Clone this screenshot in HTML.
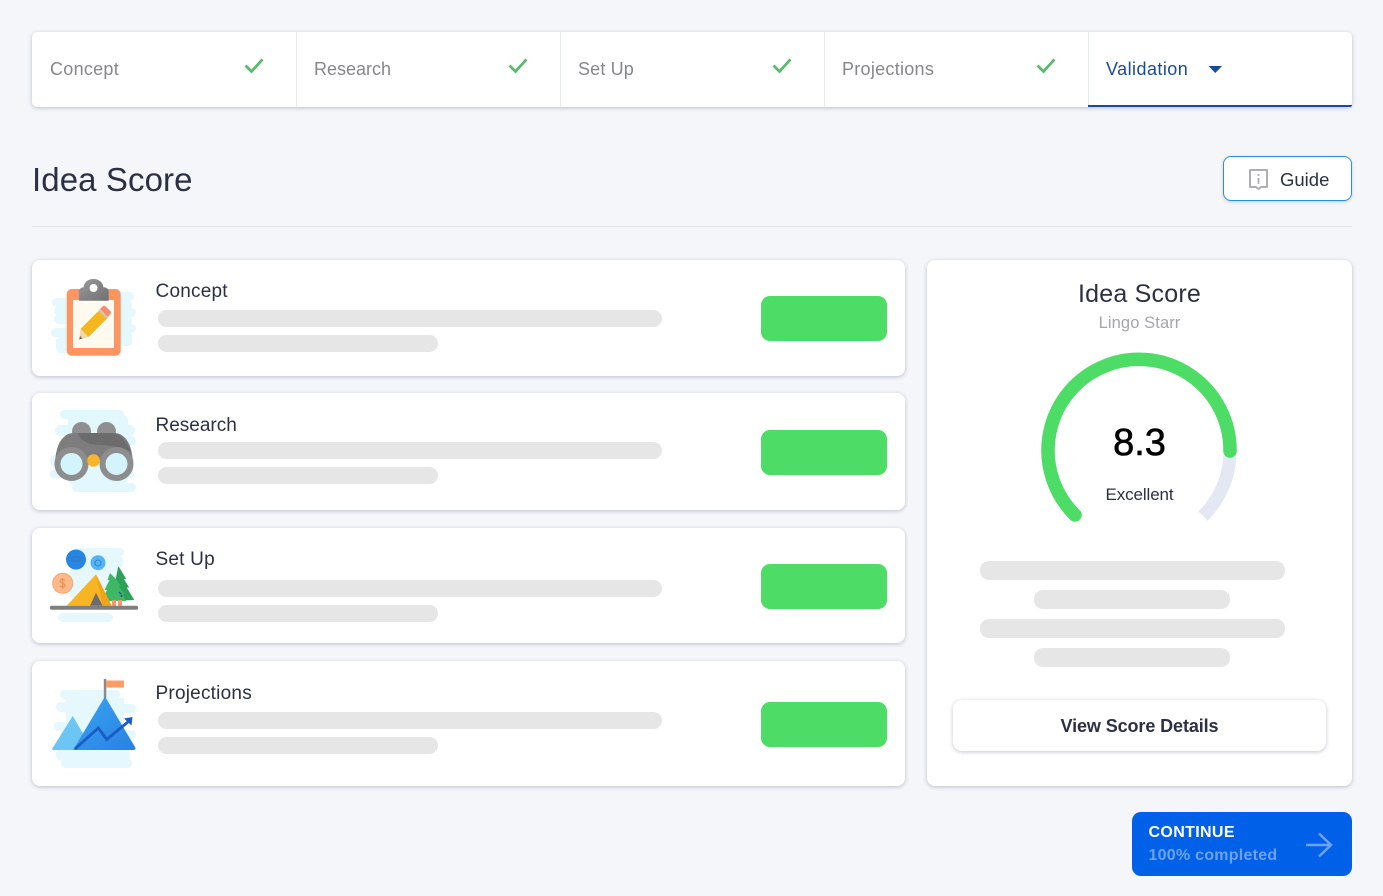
<!DOCTYPE html>
<html lang="en"><head><meta charset="utf-8"><title>Idea Score</title>
<style>
*{box-sizing:border-box}
html,body{margin:0;padding:0}
body{width:1383px;height:896px;background:#f4f6fa;position:relative;overflow:hidden;font-family:"Liberation Sans",sans-serif;color:#2c3045}
.a{position:absolute}
.card{position:absolute;background:#fff;border-radius:8px;box-shadow:0 1px 4px rgba(40,50,80,.28)}
.t{position:absolute;white-space:nowrap;line-height:24px}
.sk{position:absolute;background:#e6e6e6;border-radius:9px}
.gb{position:absolute;left:761px;width:126px;height:45px;background:#4ddc65;border-radius:9px}
.tab{position:absolute;top:57px;font-size:18px;letter-spacing:.28px;color:#85878b}
.ct{position:absolute;left:155.5px;font-size:19px;letter-spacing:.22px;color:#2c3045}
.sep{position:absolute;top:32px;width:1px;height:75px;background:#e8eaee}
svg{position:absolute;left:0;top:0}
</style></head><body>

<div class="card" style="left:32px;top:32px;width:1320px;height:75px;border-radius:5px"></div>
<div class="sep" style="left:296px"></div><div class="sep" style="left:560px"></div><div class="sep" style="left:824px"></div><div class="sep" style="left:1088px"></div>
<div class="a" style="left:1088px;top:105px;width:264px;height:2px;background:#1a4a9e;border-radius:0 0 4px 0"></div>
<div class="t tab" style="left:50px">Concept</div>
<div class="t tab" style="left:314px;letter-spacing:0">Research</div>
<div class="t tab" style="left:578px;letter-spacing:.15px">Set Up</div>
<div class="t tab" style="left:842px">Projections</div>
<div class="t tab" style="left:1106px;color:#1a4a9e;letter-spacing:.45px">Validation</div>

<div class="t" style="left:32px;top:160px;font-size:33px;line-height:40px;letter-spacing:.1px;color:#2c3045">Idea Score</div>
<div class="a" style="left:1223px;top:156px;width:129px;height:45px;background:#fff;border:1.5px solid #2b8fdc;border-radius:8px;box-shadow:0 1px 3px rgba(40,50,80,.2)"></div>
<div class="t" style="left:1280px;top:168px;font-size:18.5px;color:#2c3045">Guide</div>
<div class="a" style="left:32px;top:226px;width:1320px;height:1px;background:#dfe2e8"></div>

<div class="card" style="left:32px;top:260px;width:873px;height:116px"></div>
<div class="card" style="left:32px;top:393px;width:873px;height:117px"></div>
<div class="card" style="left:32px;top:528px;width:873px;height:115px"></div>
<div class="card" style="left:32px;top:661px;width:873px;height:125px"></div>
<div class="card" style="left:927px;top:260px;width:425px;height:526px"></div>

<div class="t ct" style="top:280px">Concept</div>
<div class="t ct" style="top:414px;letter-spacing:0">Research</div>
<div class="t ct" style="top:548px">Set Up</div>
<div class="t ct" style="top:682px">Projections</div>

<div class="sk" style="left:158px;top:310px;width:504px;height:17px"></div>
<div class="sk" style="left:158px;top:335px;width:280px;height:17px"></div>
<div class="sk" style="left:158px;top:442px;width:504px;height:17px"></div>
<div class="sk" style="left:158px;top:467px;width:280px;height:17px"></div>
<div class="sk" style="left:158px;top:580px;width:504px;height:17px"></div>
<div class="sk" style="left:158px;top:605px;width:280px;height:17px"></div>
<div class="sk" style="left:158px;top:712px;width:504px;height:17px"></div>
<div class="sk" style="left:158px;top:737px;width:280px;height:17px"></div>

<div class="gb" style="top:296px"></div>
<div class="gb" style="top:430px"></div>
<div class="gb" style="top:564px"></div>
<div class="gb" style="top:702px"></div>

<div class="t" style="left:927px;width:425px;text-align:center;top:279px;font-size:25px;line-height:30px;letter-spacing:.2px">Idea Score</div>
<div class="t" style="left:927px;width:425px;text-align:center;top:311px;font-size:16.5px;letter-spacing:.1px;color:#a3a5ab">Lingo Starr</div>
<div class="t" style="left:927px;width:425px;text-align:center;top:421px;font-size:38px;line-height:44px;color:#000;-webkit-text-stroke:.6px #000">8.3</div>
<div class="t" style="left:927px;width:425px;text-align:center;top:483px;font-size:17px;color:#2c3045;letter-spacing:-.1px">Excellent</div>

<div class="sk" style="left:980px;top:561px;width:305px;height:19px"></div>
<div class="sk" style="left:1034px;top:590px;width:196px;height:19px"></div>
<div class="sk" style="left:980px;top:619px;width:305px;height:19px"></div>
<div class="sk" style="left:1034px;top:648px;width:196px;height:19px"></div>

<div class="a" style="left:953px;top:700px;width:373px;height:51px;background:#fff;border-radius:9px;box-shadow:0 1px 4px rgba(40,50,80,.28)"></div>
<div class="t" style="left:953px;width:373px;text-align:center;top:714px;font-size:18px;font-weight:700;color:#2c3045;letter-spacing:-.1px">View Score Details</div>

<div class="a" style="left:1132px;top:812px;width:220px;height:64px;background:#0060e8;border-radius:9px"></div>
<div class="t" style="left:1148.5px;top:821px;font-size:16px;font-weight:700;color:#fff;letter-spacing:.35px">CONTINUE</div>
<div class="t" style="left:1148.5px;top:844px;font-size:16px;font-weight:700;color:#6ea2f1;letter-spacing:.25px">100% completed</div>

<svg width="1383" height="896" viewBox="0 0 1383 896" fill="none">
<defs>
<linearGradient id="mt" x1="0" y1="0" x2="1" y2="1"><stop offset="0" stop-color="#38a6f2"/><stop offset="1" stop-color="#2a80e2"/></linearGradient>
<linearGradient id="clip" x1="0" y1="0" x2="1" y2="1"><stop offset="0" stop-color="#9a9a9c"/><stop offset="1" stop-color="#707073"/></linearGradient>
</defs>
<!-- tab checks -->
<g stroke="#5abb6e" stroke-width="2.800" stroke-linecap="square">
<path d="M246.500 66.500l5 5 10-11"/><path d="M510.500 66.500l5 5 10-11"/><path d="M774.500 66.500l5 5 10-11"/><path d="M1038.500 66.500l5 5 10-11"/>
</g>
<path d="M1208.500 66h13.500l-6.700 7z" fill="#1a4a9e"/>
<!-- guide icon -->
<path d="M1250 170h17v17h-6l-2.500 2-2.500-2h-6z" stroke="#adafb4" stroke-width="2" stroke-linejoin="round"/>
<path d="M1258.500 174v2M1258.500 178v6" stroke="#adafb4" stroke-width="1.800"/>
<!-- continue arrow -->
<path d="M1306 845h24M1319 833.500l12 11.500-12 11.500" stroke="#6ea2f1" stroke-width="2.500"/>
<!-- gauge -->
<path d="M1230 451A91 91 0 0 1 1203 516" stroke="#e3e8f2" stroke-width="13"/>
<path d="M1075 515A91 91 0 1 1 1230 451" stroke="#4ddc65" stroke-width="13.500" stroke-linecap="round"/>

<!-- clipboard -->
<g fill="#e4f8fe">
<rect x="52" y="298" width="30" height="9" rx="4.500"/><rect x="54" y="306" width="28" height="10" rx="5"/><rect x="54" y="315" width="28" height="9" rx="4.500"/><rect x="51" y="328" width="30" height="9" rx="4.500"/><rect x="56" y="337" width="24" height="16" rx="4"/>
<rect x="108" y="292" width="26" height="9" rx="4.500"/><rect x="108" y="300" width="24" height="10" rx="5"/><rect x="108" y="308" width="28" height="9" rx="4.500"/><rect x="108" y="316" width="24" height="10" rx="5"/><rect x="108" y="324" width="28" height="9" rx="4.500"/><rect x="108" y="332" width="24" height="14" rx="4"/>
</g>
<rect x="66.700" y="289" width="54" height="66.700" rx="5" fill="#fd9560"/>
<rect x="73" y="300" width="41" height="48" fill="#fffaf0"/>
<path d="M79 300.700v-8.500c0-3.200 2-5 5-5h-.4c.4-4.800 4.300-8.200 9.900-8.200s9.500 3.400 9.900 8.200h.3c3 0 5 1.800 5 5v8.500z" fill="url(#clip)"/>
<circle cx="93.500" cy="288" r="4" fill="#fff"/>
<path d="M80.500 329l20-20 8 8-20 20z" fill="#f5b61e"/>
<path d="M100 309l2.500-2.500c1-1 2.300-1 3.200 0l4.500 4.500c1 1 1 2.200 0 3.200l-2.200 2.800z" fill="#fb8a6a"/>
<path d="M98.500 310.500l1.500-1.500 8 8-1.500 1.500z" fill="#c9c9c9"/>
<path d="M80.500 329l8 8-9.300 2.500z" fill="#f0d6a8"/><path d="M80 336l2.500 2.500-3.300 1z" fill="#666"/>

<!-- binoculars -->
<g fill="#e2f7fe">
<rect x="60" y="410" width="64" height="9" rx="4.500"/><rect x="68" y="415" width="60" height="70" rx="6"/><rect x="55" y="425" width="80" height="11" rx="5.500"/><rect x="70" y="436" width="66" height="10" rx="5"/><rect x="50" y="455" width="84" height="12" rx="6"/><rect x="50" y="470" width="84" height="8" rx="4"/><rect x="72" y="483" width="64" height="9" rx="4.500"/>
</g>
<circle cx="81.500" cy="431.500" r="9.500" fill="#8f8f8f"/><circle cx="106.500" cy="431.500" r="9.500" fill="#8f8f8f"/>
<path d="M55 464c.5-12 3-22 9-27 3-3 6-4 11-4h38c5 0 8 1 11 4 6 5 8.500 15 9 27h-28l-4-4H85l-4 4z" fill="#7d7d7d"/>
<path d="M78 433h35c8 1 14 9 18 19-9-5-19-6-30-7-11 0-20-3-23-12z" fill="#6c6c6c"/>
<circle cx="71.500" cy="464" r="14" stroke="#8d8d8d" stroke-width="6" fill="#d4f4fd"/>
<circle cx="116.500" cy="464" r="14" stroke="#8d8d8d" stroke-width="6" fill="#d4f4fd"/>
<circle cx="93.500" cy="460.500" r="6.300" fill="#f7b52c"/>

<!-- setup -->
<g fill="#e6f8fe">
<rect x="72" y="548" width="52" height="8" rx="4"/><rect x="85" y="556" width="38" height="12" rx="4.500"/><rect x="70" y="566" width="50" height="34" rx="6"/><rect x="58" y="613" width="55" height="9" rx="4.500"/>
</g>
<circle cx="76" cy="559.500" r="10" fill="#2486e6"/><path d="M71 559c2-3 8-3 10 0M71 561h10" stroke="#4470a8" stroke-width="1"/>
<circle cx="98" cy="562.700" r="7.500" fill="#55b4f5"/><circle cx="98" cy="563" r="3" stroke="#2c87cf" stroke-width="1"/>
<circle cx="62.700" cy="583.300" r="10" fill="#fbb98c" stroke="#f9a56e" stroke-width="1"/>
<path d="M62.700 578v11M65 580.500c-1.500-1.500-5-1-5 .7 0 2.800 5.200 1.500 5.200 4.200 0 1.700-3.700 2-5.400.5" stroke="#ef8a4e" stroke-width="1"/>
<path d="M112 601l4-13h-2l4.300-22 8 13h-2.500l5.500 8.500h-2.500l7.500 12.500z" fill="#2ca258"/>
<path d="M101.500 601l5.500-11h-2.500l5-10h-2l2.500-7 5 5 6 8h-2.500l6 8h-2l3.500 7z" fill="#3fb866"/>
<rect x="112" y="600" width="4" height="6" fill="#f59a6c"/><rect x="118" y="600" width="4" height="6" fill="#f59a6c"/>
<path d="M119 592l2 2M121 595l1 2" stroke="#2d4f88" stroke-width="1.500"/>
<path d="M66.700 605.700L96 574.300l15.700 31.400z" fill="#f7b524"/>
<path d="M96 574.300l15.700 31.400h-9z" fill="#f2a31a"/>
<path d="M90 605.700l6-13 6.700 13z" fill="#6d6d6d"/>
<rect x="50" y="605.700" width="88" height="4" rx="1.500" fill="#7f7f7f"/>

<!-- projections -->
<g fill="#e4f8fe">
<rect x="60" y="690" width="60" height="9" rx="4.500"/><rect x="56" y="702" width="48" height="10" rx="5"/><rect x="66" y="698" width="58" height="54" fill="#e4f8fe"/><rect x="54" y="722" width="50" height="9" rx="4.500"/><rect x="108" y="704" width="28" height="9" rx="4.500"/><rect x="110" y="730" width="26" height="9" rx="4.500"/>
<rect x="56" y="750" width="74" height="10" rx="4"/><rect x="61" y="758" width="71" height="10" rx="5"/>
</g>
<rect x="103.800" y="679" width="2.500" height="19" fill="#8b8b8b"/>
<rect x="106" y="680.500" width="18" height="7" fill="#fb9d66"/>
<path d="M52.300 748.500L72.700 716l20 34H54c-1.600 0-2.500-.8-1.700-1.500z" fill="#6cc5f3"/>
<path d="M73 750l32-53.500 30 50.500c1 1.600 .5 3-1.500 3z" fill="url(#mt)"/>
<path d="M75 749l23.300-21 8.400 11.500 23-19" stroke="#1a5bc4" stroke-width="2.800"/>
<path d="M124 718.500l8.500-1.500-1 8.500z" fill="#1a5bc4"/>
</svg>
</body></html>
